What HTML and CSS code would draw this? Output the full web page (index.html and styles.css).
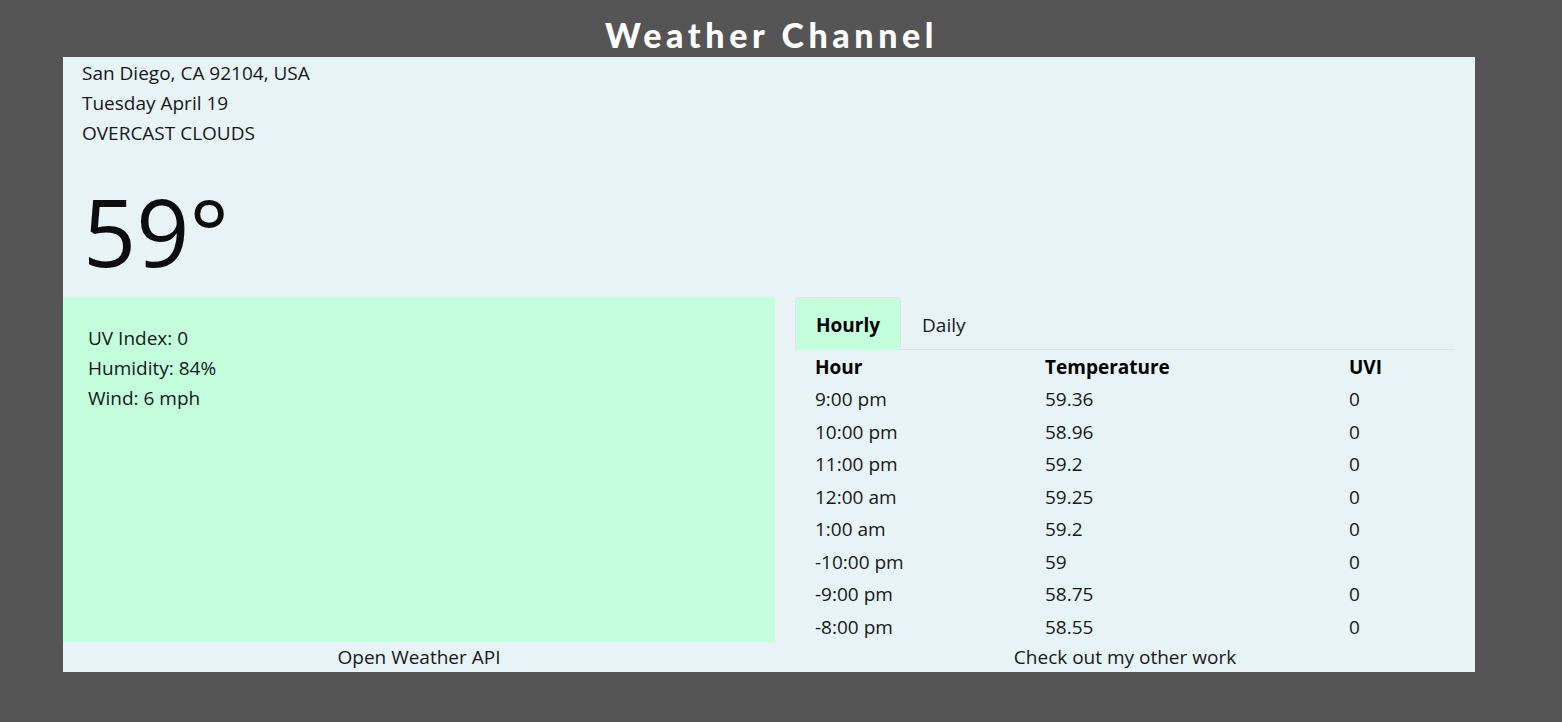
FILE: index.html
```html
<!DOCTYPE html>
<html lang="en">
<head>
<meta charset="utf-8">
<title>Weather Channel</title>
<link rel="stylesheet" href="styles.css">
</head>
<body>
<div class="page">
  <h1 class="title">Weather Channel</h1>
  <main class="app">
    <section class="current">
      <div class="line">San Diego, CA 92104, USA</div>
      <div class="line">Tuesday April 19</div>
      <div class="line">OVERCAST CLOUDS</div>
      <div class="temp">59°</div>
    </section>
    <section class="details">
      <div class="stats">
        <div class="line">UV Index: 0</div>
        <div class="line">Humidity: 84%</div>
        <div class="line">Wind: 6 mph</div>
      </div>
      <div class="forecast">
        <div class="tabs">
          <div class="tab active">Hourly</div>
          <div class="tab">Daily</div>
        </div>
        <div class="table">
          <div class="row head"><span>Hour</span><span>Temperature</span><span>UVI</span></div>
          <div class="row"><span>9:00 pm</span><span>59.36</span><span>0</span></div>
          <div class="row"><span>10:00 pm</span><span>58.96</span><span>0</span></div>
          <div class="row"><span>11:00 pm</span><span>59.2</span><span>0</span></div>
          <div class="row"><span>12:00 am</span><span>59.25</span><span>0</span></div>
          <div class="row"><span>1:00 am</span><span>59.2</span><span>0</span></div>
          <div class="row"><span>-10:00 pm</span><span>59</span><span>0</span></div>
          <div class="row"><span>-9:00 pm</span><span>58.75</span><span>0</span></div>
          <div class="row"><span>-8:00 pm</span><span>58.55</span><span>0</span></div>
        </div>
      </div>
    </section>
    <footer class="footer">
      <div class="foot-item">Open Weather API</div>
      <div class="foot-item">Check out my other work</div>
    </footer>
  </main>
</div>
</body>
</html>
```

FILE: styles.css
```css
* { box-sizing: border-box; }
html, body { margin: 0; padding: 0; }
body {
  background: #555555;
  font-family: "Open Sans", "Noto Sans", sans-serif;
  font-size: 19px;
  color: #16181b;
}
.page {
  width: 1412px;
  margin-left: 63px;
}
.title {
  margin: 0;
  height: 57px;
  line-height: 69px;
  text-align: center;
  color: #ffffff;
  font-family: "Lato", "DejaVu Sans", sans-serif;
  font-weight: 900;
  font-size: 34px;
  letter-spacing: 4.6px;
  padding-left: 5px;
}
.app {
  background: #e8f3f5;
}
.current {
  padding: 1px 19px 0;
}
.line {
  line-height: 30px;
  height: 30px;
}
.temp {
  margin-top: 11px;
  height: 138px;
  line-height: 144px;
  font-size: 93px;
  color: #0d0d0d;
  margin-left: 1px;
}
.details {
  display: grid;
  grid-template-columns: 712px 700px;
  height: 345px;
}
.stats {
  background: #c3fedd;
  padding: 26px 25px;
}
.forecast {
  padding: 0 20px;
}
.tabs {
  display: flex;
  height: 53px;
  border-bottom: 1px solid #dee2e6;
}
.tab {
  height: 53px;
  padding: 0 20px;
  line-height: 54px;
  border: 1px solid transparent;
  border-bottom: none;
  border-top-left-radius: 4px;
  border-top-right-radius: 4px;
}
.tab.active {
  background: #c3fedd;
  border-color: #dee2e6;
  font-weight: 700;
  color: #000;
}
.table {
  display: flex;
  flex-direction: column;
}
.row {
  display: grid;
  grid-template-columns: 230px 304px 126px;
  height: 32.5px;
  line-height: 34.5px;
}
.row span { padding-left: 20px; }
.row.head {
  font-weight: 700;
  color: #000;
  height: 32px;
  line-height: 34px;
}
.footer {
  display: grid;
  grid-template-columns: 712px 700px;
  height: 30px;
  line-height: 31px;
  text-align: center;
}
```
